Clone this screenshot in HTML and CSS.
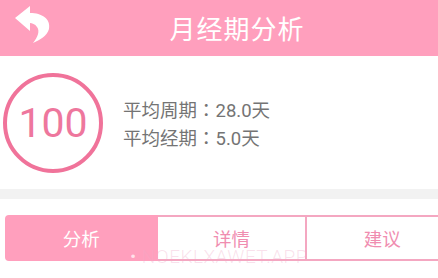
FILE: index.html
```html
<!DOCTYPE html>
<html lang="zh">
<head>
<meta charset="utf-8">
<link rel="stylesheet" href="styles.css">
</head>
<body>
<div class="page">
  <header class="header">
    <svg class="back" width="44" height="48" viewBox="10 3 44 48">
      <path d="M15 18 L30 6 L30 13 C42 13 51 19 49 29 C47 36 40 40 33 43 C38 37 40 31 37 27 C35 24 32 23 30 23 L30 31 Z" fill="#fff"/>
    </svg>
    <h1 class="title">月经期分析</h1>
  </header>
  <section class="summary">
    <div class="score">100</div>
    <div class="stats">
      <div class="stat">平均周期<span class="colon" lang="zh-Hant">：</span>28.0天</div>
      <div class="stat">平均经期<span class="colon" lang="zh-Hant">：</span>5.0天</div>
    </div>
  </section>
  <div class="divider"></div>
  <div class="tabs-wrap">
    <div class="tabs">
      <div class="tab active">分析</div>
      <div class="tab">详情</div>
      <div class="tab last">建议</div>
    </div>
    <div class="watermark"><span class="dot">•</span> NOEKLXAWET.APP</div>
  </div>
</div>
</body>
</html>
```
FILE: styles.css
```css
* { box-sizing: border-box; }
html, body {
  margin: 0;
  padding: 0;
  width: 438px;
  height: 278px;
  overflow: hidden;
  background: #fff;
  font-family: "Noto Sans CJK SC", Roboto, "Noto Sans", sans-serif;
}
.page {
  width: 438px;
  height: 278px;
  overflow: hidden;
}
.header {
  height: 56px;
  background: #ff9fbd;
  display: flex;
  align-items: center;
  position: relative;
}
.back {
  position: absolute;
  left: 10px;
  top: 3px;
}
.title {
  margin: 0;
  flex: 1;
  text-align: center;
  padding-left: 36px;
  color: #fff;
  font-size: 26px;
  font-weight: 400;
  line-height: 56px;
  letter-spacing: 1px;
}
.summary {
  height: 133px;
  display: flex;
  align-items: center;
  padding-left: 3px;
}
.score {
  width: 100px;
  height: 100px;
  border: 4px solid #f0739a;
  border-radius: 50%;
  display: flex;
  align-items: center;
  justify-content: center;
  color: #ee779d;
  font-family: Roboto, "Noto Sans", sans-serif;
  font-size: 41px;
  font-weight: 400;
}
.stats {
  margin-left: 20px;
  display: flex;
  flex-direction: column;
  color: #747474;
  font-family: Roboto, "Noto Sans CJK SC", sans-serif;
  font-size: 18.5px;
  line-height: 26px;
  padding-top: 2px;
}
.colon {
  font-family: "Noto Sans CJK TC", sans-serif;
}
.divider {
  height: 10px;
  background: #f2f2f2;
}
.tabs-wrap {
  position: relative;
  padding: 16px 0 0 5px;
}
.tabs {
  display: flex;
  width: 454px;
  height: 46px;
  border: 2px solid #f4a7c1;
  border-radius: 6px;
}
.tab {
  width: 151px;
  display: flex;
  align-items: center;
  justify-content: center;
  color: #f08db0;
  font-size: 18.5px;
  border-right: 2px solid #f4a7c1;
}
.tab.last { border-right: none; }
.tab.active {
  background: #ff9fbd;
  color: #fff;
  border-right: none;
  border-radius: 4px 0 0 4px;
  margin: -2px 0 -2px -2px;
  width: 154px;
}
.watermark {
  position: absolute;
  left: 130px;
  top: 46px;
  font-family: Roboto, sans-serif;
  font-weight: 300;
  font-size: 19px;
  letter-spacing: 0.5px;
  color: rgba(240, 170, 200, 0.35);
  white-space: nowrap;
}
.dot { color: rgba(255, 255, 255, 0.7); }
```
